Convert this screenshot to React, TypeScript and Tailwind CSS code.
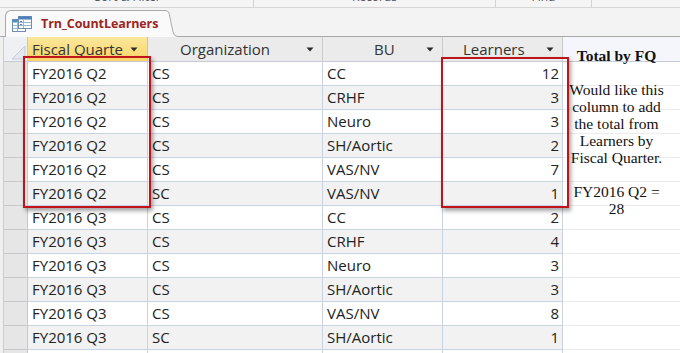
import React from "react";

const rows: [string, string, string, number][] = [
  ["FY2016 Q2", "CS", "CC", 12],
  ["FY2016 Q2", "CS", "CRHF", 3],
  ["FY2016 Q2", "CS", "Neuro", 3],
  ["FY2016 Q2", "CS", "SH/Aortic", 2],
  ["FY2016 Q2", "CS", "VAS/NV", 7],
  ["FY2016 Q2", "SC", "VAS/NV", 1],
  ["FY2016 Q3", "CS", "CC", 2],
  ["FY2016 Q3", "CS", "CRHF", 4],
  ["FY2016 Q3", "CS", "Neuro", 3],
  ["FY2016 Q3", "CS", "SH/Aortic", 3],
  ["FY2016 Q3", "CS", "VAS/NV", 8],
  ["FY2016 Q3", "SC", "SH/Aortic", 1],
  ["", "", "", -1],
];

function Arrow() {
  return (
    <svg width="8" height="5" viewBox="0 0 8 5" className="shrink-0">
      <path d="M0.5 0.5 L7.5 0.5 L4 4.5 Z" fill="#2b2b2b" />
    </svg>
  );
}

function TableIcon() {
  return (
    <svg width="20" height="17" viewBox="0 0 20 17">
      <rect x="0.5" y="3.5" width="13" height="12" fill="#fff" stroke="#6f8fb3" />
      <rect x="0.5" y="3.5" width="13" height="3" fill="#5b8ac2" />
      <line x1="1" y1="9.5" x2="13" y2="9.5" stroke="#9ab3d1" />
      <line x1="1" y1="12.5" x2="13" y2="12.5" stroke="#9ab3d1" />
      <line x1="5.5" y1="7" x2="5.5" y2="15" stroke="#9ab3d1" />
      <rect x="6.5" y="0.5" width="13" height="12" fill="#fff" stroke="#6f8fb3" />
      <rect x="6.5" y="0.5" width="13" height="3" fill="#4f7fbd" />
      <line x1="7" y1="6.5" x2="19" y2="6.5" stroke="#9ab3d1" />
      <line x1="7" y1="9.5" x2="19" y2="9.5" stroke="#9ab3d1" />
      <line x1="11.5" y1="4" x2="11.5" y2="12" stroke="#9ab3d1" />
      <rect x="8" y="5" width="2" height="1" fill="#4f7fbd" />
      <rect x="8" y="8" width="2" height="1" fill="#4f7fbd" />
    </svg>
  );
}

export default function App() {
  const cellFont = "font-['Open_Sans',sans-serif] text-[15px] text-[#222]";
  return (
    <div className="w-[680px] h-[353px] overflow-hidden relative bg-white">
      {/* ribbon bottom */}
      <div className="flex h-[8px] bg-[#f5f5f5] border-b border-[#d6d6d6] font-['Open_Sans',sans-serif] text-[12px] text-[#555] overflow-hidden">
        <div className="w-[254px] border-r border-[#d4d4d4] flex justify-center">
          <span className="leading-[14px] -mt-[10px] pl-[2px]">Sort &amp; Filter</span>
        </div>
        <div className="w-[242px] border-r border-[#d4d4d4] flex justify-center">
          <span className="leading-[14px] -mt-[10px]">Records</span>
        </div>
        <div className="w-[96px] border-r border-[#d4d4d4] flex justify-center">
          <span className="leading-[14px] -mt-[10px]">Find</span>
        </div>
        <div className="flex-1" />
      </div>
      {/* tab strip */}
      <div className="h-[29px] bg-[#f3f3f3] flex items-end">
        <div className="w-[5px] h-full border-b border-[#a9a9a9]" />
        <div className="flex items-end h-[27px]">
          <div className="h-full w-[160px] bg-[#fafafa] border-l border-t border-[#a9a9a9] rounded-tl-[6px] flex items-center gap-[9px] pl-[6px]">
            <TableIcon />
            <span className="font-['Open_Sans',sans-serif] font-bold text-[12.5px] text-[#9b2424] tracking-[-0.1px]">
              Trn_CountLearners
            </span>
          </div>
          <svg width="12" height="27" viewBox="0 0 12 27" className="shrink-0">
            <path d="M0 0.5 Q3 0.5 4 3 L8 22 Q9 26 12 26.5 L12 27 L0 27 Z" fill="#fafafa" />
            <path d="M0 0.5 Q3 0.5 4 3 L8 22 Q9 26 12 26.5" fill="none" stroke="#a9a9a9" />
          </svg>
        </div>
        <div className="flex-1 h-full border-b border-[#a9a9a9]" />
      </div>
      {/* datasheet */}
      <div className="flex">
        <div className="w-[4px] bg-[#f0f0f0] border-r border-[#cdcdcd] self-stretch" />
        <div className="flex flex-col">
          {/* header */}
          <div className="flex h-[25px] border-b border-[#c5cbd6]">
            <div className="w-[24px] bg-[#eef0f3] border-r border-[#c9c9c9] flex items-end justify-end">
              <svg width="20" height="20" viewBox="0 0 20 20">
                <path d="M5 18 L18 5 L18 18 Z" fill="#e4e8ee" stroke="#c4cedb" />
              </svg>
            </div>
            <div className={`w-[120px] bg-gradient-to-b from-[#fce79c] to-[#f9d564] border-r border-[#d9c28a] flex items-center justify-between pl-[4px] pr-[9px] ${cellFont}`}>
              <span className="text-[#333]">Fiscal Quarte</span>
              <Arrow />
            </div>
            <div className={`w-[175px] bg-[#ebebeb] border-r border-[#c9c9c9] flex items-center justify-between pl-[32px] pr-[8px] ${cellFont}`}>
              <span className="text-[#333]">Organization</span>
              <Arrow />
            </div>
            <div className={`w-[120px] bg-[#ebebeb] border-r border-[#c9c9c9] flex items-center justify-between pl-[51px] pr-[8px] ${cellFont}`}>
              <span className="text-[#333]">BU</span>
              <Arrow />
            </div>
            <div className={`w-[120px] bg-[#ebebeb] border-r border-[#c9c9c9] flex items-center justify-between pl-[20px] pr-[8px] ${cellFont}`}>
              <span className="text-[#333]">Learners</span>
              <Arrow />
            </div>
            <div className="w-[117px] bg-[#f5f6fb]" />
          </div>
          {rows.map((r, i) => {
            const bg = i % 2 === 0 ? "bg-white" : "bg-[#f2f2f2]";
            return (
              <div key={i} className={`flex h-[24px] shrink-0 ${cellFont}`}>
                <div className="w-[24px] bg-[#e6e6e6] border-r border-b border-[#c9c9c9]" />
                <div className={`w-[120px] ${bg} border-r border-b border-[#c9d2e3] pl-[4px] leading-[23px]`}>{r[0]}</div>
                <div className={`w-[175px] ${bg} border-r border-b border-[#c9d2e3] pl-[4px] leading-[23px]`}>{r[1]}</div>
                <div className={`w-[120px] ${bg} border-r border-b border-[#c9d2e3] pl-[4px] leading-[23px]`}>{r[2]}</div>
                <div className={`w-[120px] ${bg} border-r border-b border-[#c9d2e3] pr-[3px] text-right leading-[23px]`}>
                  {r[3] >= 0 ? r[3] : ""}
                </div>
                <div className="w-[117px] bg-white border-b border-[#ececec]" />
              </div>
            );
          })}
        </div>
      </div>

      {/* note overlay */}
      <div className="absolute left-[558px] top-[47px] w-[117px] text-center font-['Liberation_Serif',serif] text-[15.5px] leading-[17px] text-[#111]">
        <div className="font-bold">Total by FQ</div>
        <div className="h-[17px]" />
        <div>Would like this</div>
        <div>column to add</div>
        <div>the total from</div>
        <div>Learners by</div>
        <div>Fiscal Quarter.</div>
        <div className="h-[17px]" />
        <div>FY2016 Q2 =</div>
        <div>28</div>
      </div>

      {/* red highlight boxes */}
      <div className="absolute left-[23px] top-[56px] w-[128px] h-[152px] border-2 border-[#c0141c] shadow-[2px_3px_4px_rgba(0,0,0,0.35)]" />
      <div className="absolute left-[441px] top-[57px] w-[128px] h-[151px] border-2 border-[#c0141c] shadow-[2px_3px_4px_rgba(0,0,0,0.35)]" />
    </div>
  );
}
